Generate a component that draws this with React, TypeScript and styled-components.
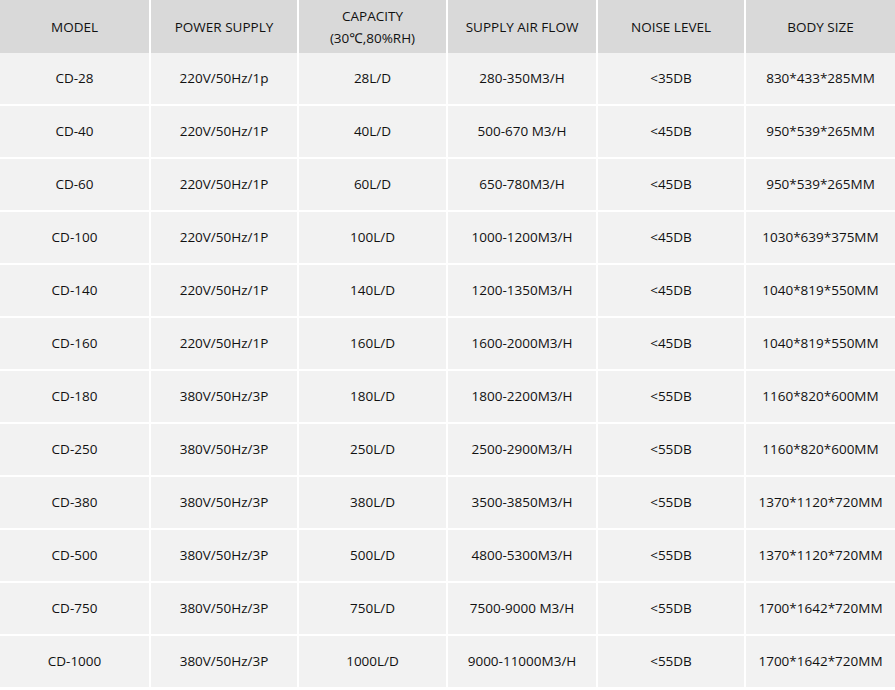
import React from "react";
import styled, { createGlobalStyle } from "styled-components";

const Global = createGlobalStyle`
  html, body { margin: 0; padding: 0; background: #ffffff; }
  body { font-family: "Open Sans", "Noto Sans", sans-serif; }
`;

const Grid = styled.div`
  display: grid;
  grid-template-columns: 149px 146px 147px 148px 146px 149px;
  grid-auto-rows: 51px;
  column-gap: 2px;
  row-gap: 2px;
  width: 895px;
`;

const HeadCell = styled.div`
  height: 53px;
  background: #d9d9d9;
  color: #111111;
  font-size: 13.5px;
  line-height: 22px;
  display: flex;
  flex-direction: column;
  align-items: center;
  justify-content: center;
  text-align: center;
`;

const Cell = styled.div`
  background: #f2f2f2;
  color: #111111;
  font-size: 13.5px;
  display: flex;
  align-items: center;
  justify-content: center;
  padding-bottom: 2px;
`;

const rows: string[][] = [
  ["CD-28", "220V/50Hz/1p", "28L/D", "280-350M3/H", "<35DB", "830*433*285MM"],
  ["CD-40", "220V/50Hz/1P", "40L/D", "500-670 M3/H", "<45DB", "950*539*265MM"],
  ["CD-60", "220V/50Hz/1P", "60L/D", "650-780M3/H", "<45DB", "950*539*265MM"],
  ["CD-100", "220V/50Hz/1P", "100L/D", "1000-1200M3/H", "<45DB", "1030*639*375MM"],
  ["CD-140", "220V/50Hz/1P", "140L/D", "1200-1350M3/H", "<45DB", "1040*819*550MM"],
  ["CD-160", "220V/50Hz/1P", "160L/D", "1600-2000M3/H", "<45DB", "1040*819*550MM"],
  ["CD-180", "380V/50Hz/3P", "180L/D", "1800-2200M3/H", "<55DB", "1160*820*600MM"],
  ["CD-250", "380V/50Hz/3P", "250L/D", "2500-2900M3/H", "<55DB", "1160*820*600MM"],
  ["CD-380", "380V/50Hz/3P", "380L/D", "3500-3850M3/H", "<55DB", "1370*1120*720MM"],
  ["CD-500", "380V/50Hz/3P", "500L/D", "4800-5300M3/H", "<55DB", "1370*1120*720MM"],
  ["CD-750", "380V/50Hz/3P", "750L/D", "7500-9000 M3/H", "<55DB", "1700*1642*720MM"],
  ["CD-1000", "380V/50Hz/3P", "1000L/D", "9000-11000M3/H", "<55DB", "1700*1642*720MM"],
];

export default function App() {
  return (
    <>
      <Global />
      <Grid>
        <HeadCell>MODEL</HeadCell>
        <HeadCell>POWER SUPPLY</HeadCell>
        <HeadCell>
          <span>CAPACITY</span>
          <span>(30℃,80%RH)</span>
        </HeadCell>
        <HeadCell>SUPPLY AIR FLOW</HeadCell>
        <HeadCell>NOISE LEVEL</HeadCell>
        <HeadCell>BODY SIZE</HeadCell>
        {rows.map((r, i) =>
          r.map((c, j) => <Cell key={`${i}-${j}`}>{c}</Cell>)
        )}
      </Grid>
    </>
  );
}
